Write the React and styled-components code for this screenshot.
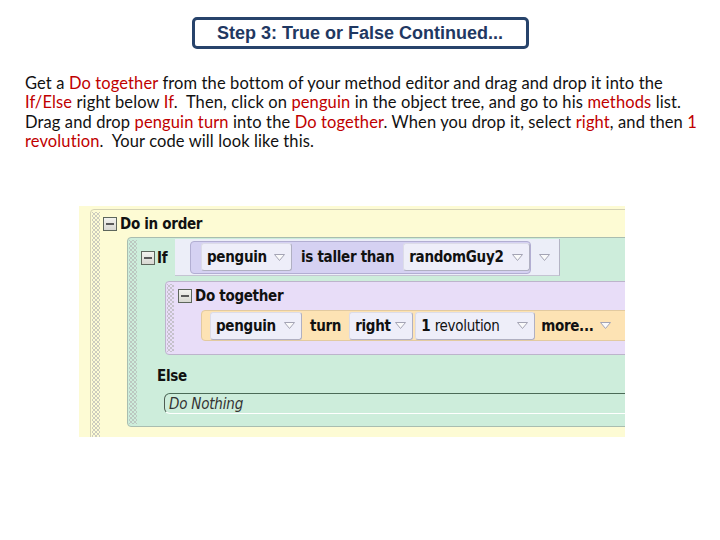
import React from 'react'
import styled, { createGlobalStyle } from 'styled-components'

const Global = createGlobalStyle`
  html, body { margin: 0; padding: 0; background: #fff; }
  #root { width: 720px; height: 540px; overflow: hidden; }
`

const Page = styled.div`
  width: 720px;
  height: 540px;
  padding-top: 17px;
  box-sizing: border-box;
`

const Title = styled.div`
  width: 337px;
  height: 32px;
  margin: 0 auto;
  box-sizing: border-box;
  border: 3px solid #27436b;
  border-radius: 5px;
  display: flex;
  align-items: center;
  justify-content: center;
  font-family: "Liberation Sans", Arial, sans-serif;
  font-weight: bold;
  font-size: 18px;
  color: #1f3862;
`

const Text = styled.div`
  margin: 25px 0 0 25px;
  font-family: Lato, "Open Sans", sans-serif;
  font-size: 16.5px;
  letter-spacing: 0.12px;
  line-height: 19.3px;
  color: #111;
`

const Line = styled.div`
  white-space: pre;
`

const Red = styled.span`
  color: #c00000;
`

const Shot = styled.div`
  width: 546px;
  height: 231px;
  margin: 55px 0 0 79px;
  background: #fdfbd4;
  overflow: hidden;
  display: flex;
  flex-direction: column;
  padding: 3px 0 0 11px;
  box-sizing: border-box;
  font-family: "DejaVu Sans Condensed", "Liberation Sans Narrow", "DejaVu Sans", sans-serif;
  color: #111;
`

const Block = styled.div`
  display: flex;
  background: ${p => p.$bg};
  border: 1px solid ${p => p.$edge};
  border-radius: 4px 0 0 4px;
  margin-right: -10px;
`

const OuterBlock = styled(Block)`
  flex: 1;
  margin-bottom: -6px;
`

const Grip = styled.div`
  width: ${p => p.$w || 8}px;
  flex: none;
  margin: 2px 1px 2px 1px;
  background-image:
    radial-gradient(circle, #b2b2b2 0.6px, transparent 0.9px),
    radial-gradient(circle, #b2b2b2 0.6px, transparent 0.9px);
  background-size: 4px 4px;
  background-position: 0 0, 2px 2px;
`

const Body = styled.div`
  flex: 1;
  display: flex;
  flex-direction: column;
  padding-bottom: ${p => p.$pb || 0}px;
`

const Head = styled.div`
  height: ${p => p.$h}px;
  display: flex;
  align-items: center;
  gap: 3px;
  padding-left: ${p => p.$pl || 2}px;
  font-weight: bold;
  font-size: 15px;
  letter-spacing: -0.3px;
`

const Minus = styled.div`
  width: 14px;
  height: 14px;
  box-sizing: border-box;
  border: 1px solid #5d665c;
  background: linear-gradient(#f2f2ee, #d8d8d2);
  display: flex;
  align-items: center;
  justify-content: center;
  &::after {
    content: '';
    width: 8px;
    height: 2px;
    background: #5a5a5a;
  }
`

const IfRow = styled.div`
  height: 42px;
  display: flex;
  align-items: flex-start;
`

const IfHead = styled(Head)`
  width: 37px;
  flex: none;
  box-sizing: border-box;
  height: 40px;
  padding-left: 3px;
  gap: 2px;
`

const CondArea = styled.div`
  width: 385px;
  height: 37px;
  margin-top: 1px;
  box-sizing: border-box;
  background: #eceef8;
  border-right: 1px solid #b4b4c4;
  border-bottom: 1px solid #c4c4d2;
  display: flex;
  align-items: center;
  padding-left: 15px;
  gap: 8px;
`

const Stmt = styled.div`
  height: ${p => p.$h}px;
  display: flex;
  align-items: center;
  background: ${p => p.$bg};
  border: 1px solid ${p => p.$edge};
  border-radius: ${p => p.$r || '4px 0 0 4px'};
  box-sizing: border-box;
`

const Tile = styled.div`
  height: ${p => p.$h || 28}px;
  width: ${p => p.$w}px;
  box-sizing: border-box;
  display: flex;
  align-items: center;
  justify-content: space-between;
  padding: 0 6px 0 5px;
  background: #eeeef9;
  border: 1px solid #dcdce8;
  border-right-color: #b0b0c2;
  border-bottom-color: #b0b0c2;
  border-radius: 3px;
  font-weight: bold;
  font-size: 15px;
  letter-spacing: -0.3px;
`

const Word = styled.span`
  font-weight: ${p => (p.$light ? 'normal' : 'bold')};
  font-size: 15px;
  letter-spacing: -0.3px;
  padding: 0 ${p => p.$px || 0}px;
  white-space: nowrap;
`

const Else = styled.div`
  margin: 12px 0 0 19px;
  height: 26px;
  font-weight: bold;
  font-size: 15px;
  letter-spacing: -0.3px;
`

const Nothing = styled.div`
  margin-left: 26px;
  height: 21px;
  box-sizing: border-box;
  border-top: 1px solid #4b6b57;
  border-left: 1px solid #4e5c52;
  border-bottom: 1px solid #fff;
  border-radius: 6px 0 0 6px;
  display: flex;
  align-items: center;
  padding-left: 4px;
  font-style: italic;
  font-size: 15px;
  letter-spacing: -0.2px;
  color: #333;
`

const Arrow = () => (
  <svg width="11" height="7" viewBox="0 0 11 7" style={{ flex: 'none' }}>
    <path d="M0.5 0.5 H10.5 L5.5 6.5 Z" fill="#fafafa" stroke="#a4a4b4" strokeWidth="1" />
  </svg>
)

export default function App() {
  return (
    <Page>
      <Global />
      <Title>Step 3: True or False Continued...</Title>
      <Text>
        <Line>Get a <Red>Do together</Red> from the bottom of your method editor and drag and drop it into the</Line>
        <Line><Red>If/Else</Red> right below <Red>If</Red>.  Then, click on <Red>penguin</Red> in the object tree, and go to his <Red>methods</Red> list.</Line>
        <Line>Drag and drop <Red>penguin turn</Red> into the <Red>Do together</Red>. When you drop it, select <Red>right</Red>, and then <Red>1</Red></Line>
        <Line><Red>revolution</Red>.  Your code will look like this.</Line>
      </Text>
      <Shot>
        <OuterBlock $bg="#fdfbd4" $edge="#d4d2b4">
          <Grip $w={8} />
          <Body>
            <Head $h={27} $pl={2}><Minus />Do in order</Head>
            <Block $bg="#cdeddb" $edge="#a9bdb0" style={{ marginLeft: 26, marginBottom: 11 }}>
              <Grip />
              <Body $pb={12}>
                <IfRow>
                  <IfHead><Minus />If</IfHead>
                  <CondArea>
                    <Stmt $h={33} $bg="#d5d1f2" $edge="#b2aed2" $r="4px">
                      <Grip $w={8} />
                      <Tile $w={91}>penguin<Arrow /></Tile>
                      <Word $px={9}>is taller than</Word>
                      <Tile $w={127}>randomGuy2<Arrow /></Tile>
                    </Stmt>
                    <Arrow />
                  </CondArea>
                </IfRow>
                <Block $bg="#e8ddf8" $edge="#bdb4cc" style={{ marginLeft: 27, marginTop: 1 }}>
                  <Grip $w={7} />
                  <Body $pb={13}>
                    <Head $h={28} $pl={3}><Minus />Do together</Head>
                    <Stmt $h={31} $bg="#fde3b4" $edge="#e2caa0" style={{ marginLeft: 26, marginRight: -10 }}>
                      <Grip $w={6} />
                      <Tile $w={92}>penguin<Arrow /></Tile>
                      <Word $px={8}>turn</Word>
                      <Tile $w={64}>right<Arrow /></Tile>
                      <Tile $w={120} style={{ marginLeft: 2 }}>
                        <span>1 <Word $light>revolution</Word></span><Arrow />
                      </Tile>
                      <Word $px={6}>more...</Word>
                      <Arrow />
                    </Stmt>
                  </Body>
                </Block>
                <Else>Else</Else>
                <Nothing>Do Nothing</Nothing>
              </Body>
            </Block>
          </Body>
        </OuterBlock>
      </Shot>
    </Page>
  )
}
